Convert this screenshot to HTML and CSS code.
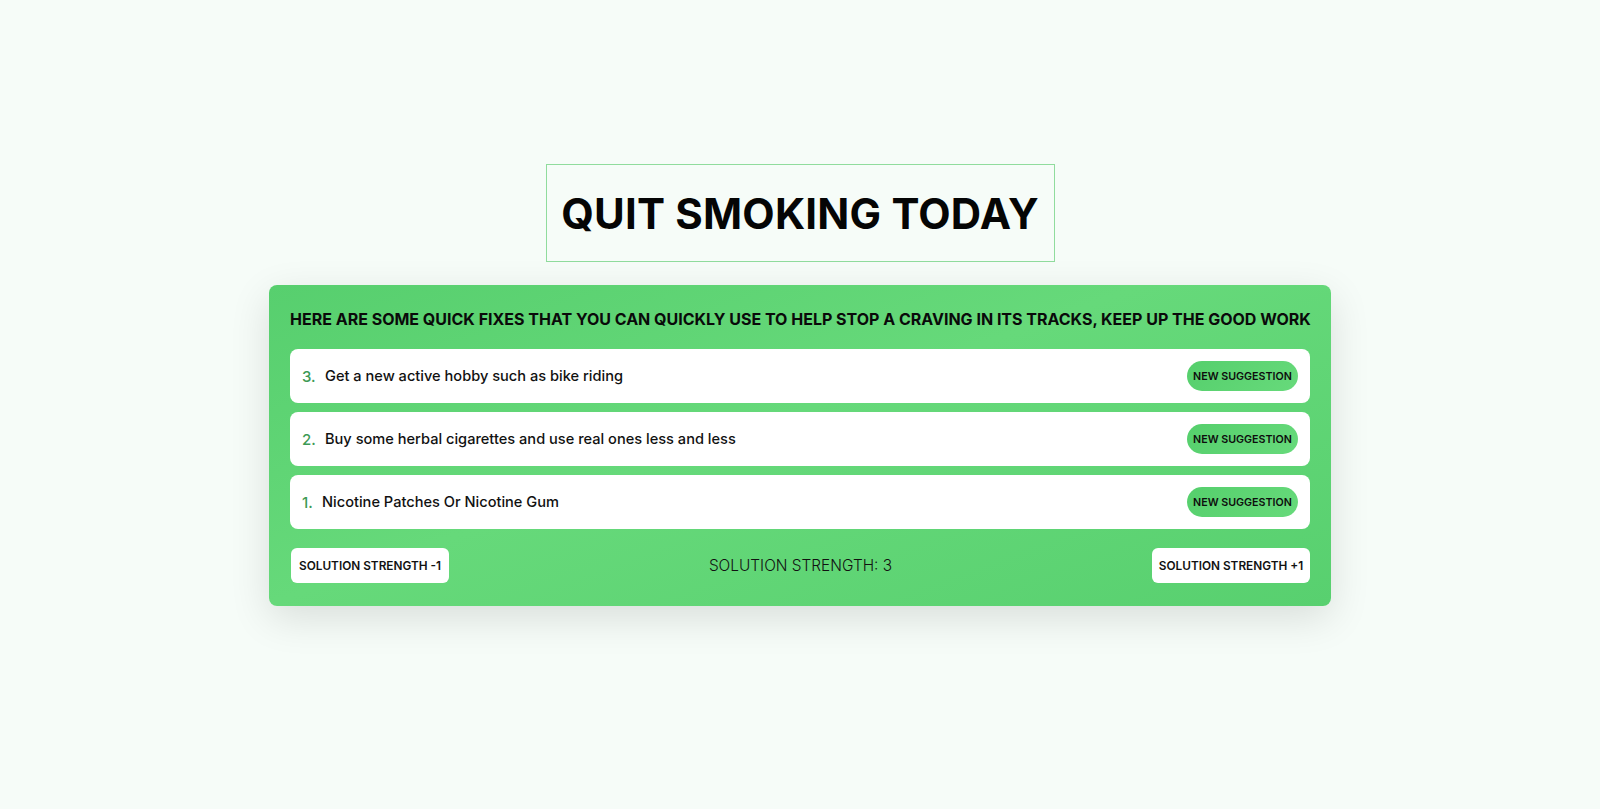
FILE: index.html
```html
<!DOCTYPE html>
<html lang="en">
<head>
<meta charset="utf-8">
<title>Quit Smoking Today</title>
<link rel="stylesheet" href="styles.css">
</head>
<body>
<main class="page">
  <div class="title-box">
    <h1 class="title">QUIT SMOKING TODAY</h1>
  </div>
  <section class="card">
    <h2 class="card-heading">HERE ARE SOME QUICK FIXES THAT YOU CAN QUICKLY USE TO HELP STOP A CRAVING IN ITS TRACKS, KEEP UP THE GOOD WORK</h2>
    <ul class="list">
      <li class="row">
        <span class="num">3.</span>
        <span class="text">Get a new active hobby such as bike riding</span>
        <button class="pill">NEW SUGGESTION</button>
      </li>
      <li class="row">
        <span class="num">2.</span>
        <span class="text">Buy some herbal cigarettes and use real ones less and less</span>
        <button class="pill">NEW SUGGESTION</button>
      </li>
      <li class="row">
        <span class="num num-one">1.</span>
        <span class="text">Nicotine Patches Or Nicotine Gum</span>
        <button class="pill">NEW SUGGESTION</button>
      </li>
    </ul>
    <div class="footer">
      <button class="btn">SOLUTION STRENGTH -1</button>
      <span class="strength">SOLUTION STRENGTH: 3</span>
      <button class="btn">SOLUTION STRENGTH +1</button>
    </div>
  </section>
</main>
</body>
</html>
```

FILE: styles.css
```css
html, body {
  margin: 0;
  padding: 0;
}
body {
  background: #f6fcf8;
  font-family: "Inter", "Open Sans", sans-serif;
  color: #111;
  width: 1600px;
  height: 809px;
  overflow: hidden;
}
.page {
  display: flex;
  flex-direction: column;
  align-items: center;
  padding-top: 164px;
}
.title-box {
  box-sizing: border-box;
  width: 509px;
  height: 98px;
  border: 1px solid #90dc9d;
  display: flex;
  align-items: center;
  justify-content: center;
}
.title {
  margin: 0;
  font-size: 42px;
  font-weight: 700;
  letter-spacing: 0.2px;
  color: #050505;
}
.card {
  box-sizing: border-box;
  margin-top: 23px;
  width: 1062px;
  padding: 21px 21px 23px 21px;
  border-radius: 8px;
  background: linear-gradient(160deg, #57cf6e 0%, #66d97a 45%, #58d06f 100%);
  box-shadow: 0 12px 40px rgba(0, 0, 0, 0.12);
}
.card-heading {
  margin: 0 0 17px 0;
  font-size: 16px;
  line-height: 26px;
  font-weight: 700;
  color: #0a0a0a;
  white-space: nowrap;
}
.list {
  list-style: none;
  margin: 0;
  padding: 0;
  display: flex;
  flex-direction: column;
  gap: 9px;
}
.row {
  box-sizing: border-box;
  height: 54px;
  background: #fff;
  border-radius: 8px;
  display: flex;
  align-items: center;
  padding: 0 12px;
}
.num {
  color: #3d9a55;
  font-size: 15px;
  font-weight: 500;
  width: 23px;
}
.num-one {
  width: 20px;
}
.text {
  flex: 1;
  font-size: 14.6px;
  font-weight: 500;
  color: #111;
}
.pill {
  box-sizing: border-box;
  width: 111px;
  height: 30px;
  border: none;
  border-radius: 15px;
  background: linear-gradient(135deg, #55cf6c, #67da7b);
  font-family: inherit;
  font-size: 10.7px;
  font-weight: 600;
  color: #0d0d0d;
  padding: 0;
}
.footer {
  margin-top: 19px;
  display: flex;
  align-items: center;
  justify-content: space-between;
  padding-left: 1px;
}
.btn {
  box-sizing: border-box;
  height: 35px;
  width: 158px;
  border: none;
  border-radius: 6px;
  background: #fff;
  font-family: inherit;
  font-size: 11.8px;
  font-weight: 600;
  color: #111;
  padding: 0;
}
.strength {
  font-size: 15.4px;
  font-weight: 300;
  color: #111;
}
```
